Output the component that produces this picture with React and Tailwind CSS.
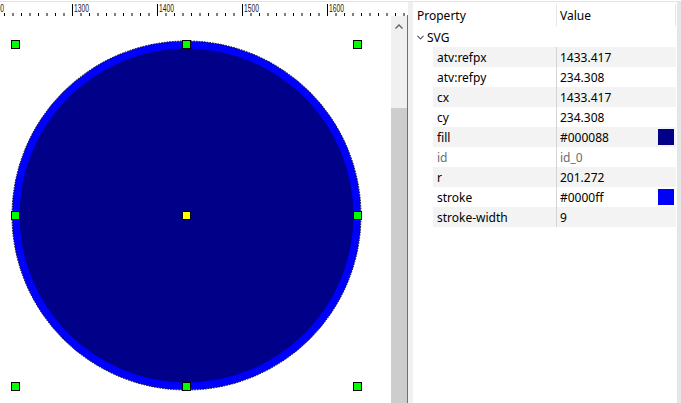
import { ChevronDown } from "lucide-react";

const rows = [
  { name: "atv:refpx", value: "1433.417" },
  { name: "atv:refpy", value: "234.308" },
  { name: "cx", value: "1433.417" },
  { name: "cy", value: "234.308" },
  { name: "fill", value: "#000088", swatch: "bg-[#000088]" },
  { name: "id", value: "id_0", muted: true },
  { name: "r", value: "201.272" },
  { name: "stroke", value: "#0000ff", swatch: "bg-[#0000ff]" },
  { name: "stroke-width", value: "9" },
];

// major ticks every 85px (100 units), minor every 8.5px
const majors = [
  { x: -12.5, label: "1200" },
  { x: 72.5, label: "1300" },
  { x: 157.5, label: "1400" },
  { x: 242.5, label: "1500" },
  { x: 327.5, label: "1600" },
];

const Ruler = () => {
  const minors = [];
  for (let i = -1; i < 50; i++) {
    const x = -12.5 + i * 8.5;
    if (x > 0 && x < 407) minors.push(x);
  }
  return (
    <svg width="407" height="14" className="block shrink-0">
      {minors.map((x) => (
        <line key={x} x1={x} x2={x} y1="11" y2="14" stroke="#000" strokeWidth="1" />
      ))}
      {majors.map((m) => (
        <g key={m.label}>
          <line x1={m.x} x2={m.x} y1="2" y2="14" stroke="#000" strokeWidth="1" />
          <text
            x={m.x + 1.5}
            y="10"
            fontSize="10"
            fontFamily="Liberation Sans, sans-serif"
            fill="#1a1a1a"
            textLength="15"
            lengthAdjust="spacingAndGlyphs"
          >
            {m.label}
          </text>
        </g>
      ))}
    </svg>
  );
};

const Handle = ({ x, y, color = "#00ff00" }) => (
  <rect x={x - 4} y={y - 4} width="8" height="8" fill={color} stroke="#000" strokeWidth="1" />
);

const Canvas = () => {
  const cx = 186.5;
  const cy = 199.5;
  const xs = [15.5, 186.5, 357.5];
  const ys = [28.5, 199.5, 370.5];
  return (
    <div className="w-[391px] h-full bg-white overflow-hidden">
      <svg width="391" height="387" className="block">
        <circle cx={cx} cy={cy} r="174.5" fill="#0000ff" />
        <circle cx={cx} cy={cy} r="167" fill="#000088" />
        <circle
          cx={cx}
          cy={cy}
          r="174.5"
          fill="none"
          stroke="#000"
          strokeWidth="1"
          strokeDasharray="1.5 1.2"
        />
        {ys.map((y) =>
          xs.map((x) =>
            x === cx && y === cy ? null : <Handle key={`${x}-${y}`} x={x} y={y} />,
          ),
        )}
        <Handle x={cx} y={cy} color="#ffff00" />
      </svg>
    </div>
  );
};

const Scrollbar = () => (
  <div className="w-[16px] h-full flex flex-col bg-[#f0f0f0]">
    <div className="h-[20px] flex items-center justify-center">
      <svg width="8" height="5" className="block">
        <polyline points="0.5,4.5 4,1 7.5,4.5" fill="none" stroke="#606060" strokeWidth="1.3" />
      </svg>
    </div>
    <div className="h-[72px]" />
    <div className="flex-1 bg-[#cdcdcd]" />
  </div>
);

const PropertyRow = ({ row, index }) => (
  <div
    className={`ml-[20px] mr-[1px] h-[20px] flex items-stretch ${
      index % 2 === 0 ? "bg-[#f3f3f3]" : "bg-white"
    } ${row.muted ? "text-[#6d6d6d]" : "text-black"}`}
  >
    <div className="w-[123px] pl-[4px] pt-px leading-[20px] whitespace-nowrap">{row.name}</div>
    <div className="w-px bg-[#d4d4d4]" />
    <div className="flex-1 pl-[3px] pr-[2px] flex items-center justify-between">
      <span className="pt-px leading-[20px]">{row.value}</span>
      {row.swatch && <span className={`w-[16px] h-[16px] ${row.swatch}`} />}
    </div>
  </div>
);

const PropertyPanel = () => (
  <div className="w-[264px] h-full bg-white flex flex-col">
    <div className="h-[25px] flex items-center">
      <div className="w-[143px] pl-[4px] pt-[2px]">Property</div>
      <div className="w-px h-[22px] bg-[#e5e5e5]" />
      <div className="w-[118px] pl-[3px] pt-[2px]">Value</div>
      <div className="w-px h-[22px] bg-[#e5e5e5]" />
    </div>
    <div className="h-[20px] flex items-center">
      <ChevronDown size={11} strokeWidth={2.2} className="ml-[2px] mr-[1px] text-[#505050]" />
      <span className="pt-px">SVG</span>
    </div>
    {rows.map((row, i) => (
      <PropertyRow key={row.name} row={row} index={i} />
    ))}
  </div>
);

export default function App() {
  return (
    <div
      className="w-[681px] h-[403px] bg-white pt-px overflow-hidden text-[12px] leading-[16px]"
      style={{ fontFamily: '"Noto Sans", "Open Sans", sans-serif' }}
    >
      <div className="h-full border-t border-[#e3e3e3] flex">
        <div className="w-[407px] h-full flex flex-col">
          <Ruler />
          <div className="flex-1 flex min-h-0">
            <Canvas />
            <Scrollbar />
          </div>
        </div>
        <div className="w-px h-full flex flex-col">
          <div className="h-[13px] bg-white" />
          <div className="flex-1 bg-[#707070]" />
        </div>
        <div className="w-[5px] h-full bg-[#f0f0f0]" />
        <PropertyPanel />
        <div className="w-[4px] h-full bg-[#e6e6e6]" />
      </div>
    </div>
  );
}
